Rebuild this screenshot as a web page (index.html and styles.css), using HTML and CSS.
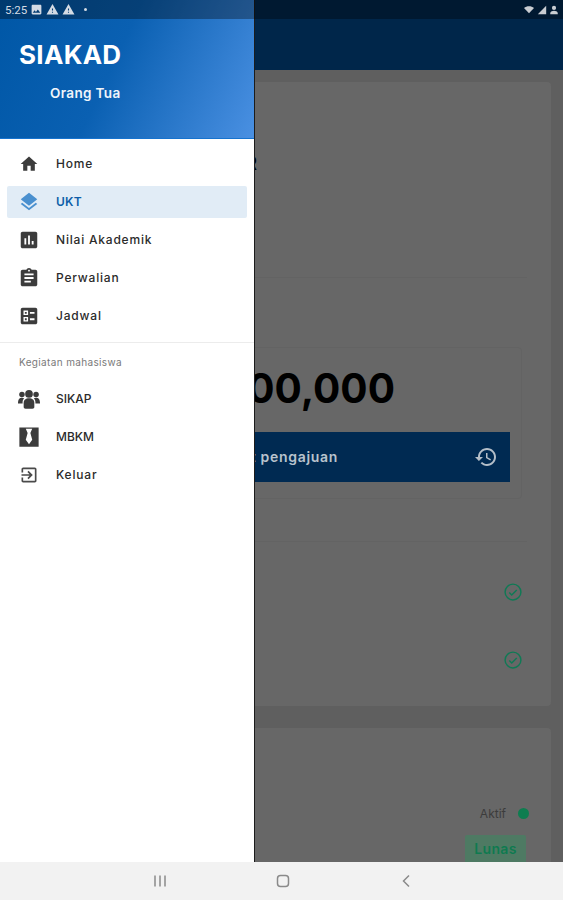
FILE: index.html
```html
<!DOCTYPE html>
<html lang="id">
<head>
<meta charset="utf-8">
<title>SIAKAD</title>
<link rel="stylesheet" href="styles.css">
</head>
<body>
<div class="screen">
  <div class="status">
    <div class="status-left">
      <span class="time">5:25</span>
      <svg class="si" viewBox="0 0 24 24"><path d="M21 19V5c0-1.100-.9-2-2-2H5c-1.100 0-2 .9-2 2v14c0 1.100.9 2 2 2h14c1.100 0 2-.9 2-2zM8.500 13.500l2.500 3 3.500-4.500 4.500 6H5l3.500-4.500z"/></svg>
      <svg class="si" viewBox="0 0 24 24"><path d="M1 21h22L12 2 1 21zm12-3h-2v-2h2v2zm0-4h-2v-4h2v4z"/></svg>
      <svg class="si" viewBox="0 0 24 24"><path d="M1 21h22L12 2 1 21zm12-3h-2v-2h2v2zm0-4h-2v-4h2v4z"/></svg>
      <span class="dot-small"></span>
    </div>
    <div class="status-right">
      <svg class="si-r" viewBox="0 0 24 24"><path d="M12 20L0 7c3.300-2.800 7.500-4 12-4s8.700 1.200 12 4L12 20z"/></svg>
      <svg class="si-r si-sig" viewBox="0 0 24 24"><path d="M2 22h20V2z"/></svg>
      <svg class="si-r si-sig" viewBox="0 0 24 24"><circle cx="12" cy="7" r="5"/><path d="M3 22v-3c0-3 6-5 9-5s9 2 9 5v3z"/></svg>
    </div>
  </div>

  <div class="appbar"></div>

  <main class="content">
    <section class="card card-main">
      <div class="intro"><span class="intro-title">Pembayaran R</span></div>
      <div class="bill">
        <div class="amount">Rp 2,000,000</div>
        <div class="action">
          <span class="action-text">Riwayat pengajuan</span>
          <svg class="action-icon" viewBox="0 0 24 24"><path d="M13 3c-4.970 0-9 4.030-9 9H1l3.890 3.890.07.14L9 12H6c0-3.870 3.130-7 7-7s7 3.130 7 7-3.130 7-7 7c-1.930 0-3.680-.79-4.940-2.060l-1.420 1.420C8.270 19.990 10.510 21 13 21c4.970 0 9-4.030 9-9s-4.030-9-9-9zm-1 5v5l4.280 2.540.72-1.210-3.500-2.080V8H12z"/></svg>
        </div>
      </div>
      <div class="checks">
        <div class="check-row"><svg class="check" viewBox="0 0 24 24"><circle cx="12" cy="12" r="9.500"/><path d="M7.500 12.500l3 3 6-6"/></svg></div>
        <div class="check-row"><svg class="check" viewBox="0 0 24 24"><circle cx="12" cy="12" r="9.500"/><path d="M7.500 12.500l3 3 6-6"/></svg></div>
      </div>
    </section>

    <section class="card card-second">
      <div class="state"><span class="state-text">Aktif</span><span class="state-dot"></span></div>
      <div class="badge-row"><span class="badge">Lunas</span></div>
    </section>
  </main>

  <aside class="drawer">
    <header class="drawer-head">
      <div class="brand">SIAKAD</div>
      <div class="role">Orang Tua</div>
    </header>
    <nav class="menu">
      <a class="item">
        <svg class="ico ico-home" viewBox="0 0 24 24"><path d="M10 20v-6h4v6h5v-8h3L12 3 2 12h3v8z"/></svg>
        <span>Home</span>
      </a>
      <a class="item item-active">
        <svg class="ico" viewBox="0 0 24 24"><path d="M11.990 18.540l-7.370-5.730L3 14.070l9 7 9-7-1.630-1.270-7.380 5.740zM12 16l7.360-5.730L21 9l-9-7-9 7 1.630 1.270L12 16z"/></svg>
        <span>UKT</span>
      </a>
      <a class="item">
        <svg class="ico" viewBox="0 0 24 24"><path d="M19 3H5c-1.100 0-2 .9-2 2v14c0 1.100.9 2 2 2h14c1.100 0 2-.9 2-2V5c0-1.100-.9-2-2-2zM9 17H7v-7h2v7zm4 0h-2V7h2v10zm4 0h-2v-4h2v4z"/></svg>
        <span>Nilai Akademik</span>
      </a>
      <a class="item">
        <svg class="ico" viewBox="0 0 24 24"><path d="M19 3h-4.180C14.400 1.840 13.300 1 12 1c-1.300 0-2.400.84-2.820 2H5c-1.100 0-2 .9-2 2v14c0 1.100.9 2 2 2h14c1.100 0 2-.9 2-2V5c0-1.100-.9-2-2-2zm-7 0c.55 0 1 .45 1 1s-.45 1-1 1-1-.45-1-1 .45-1 1-1zm2 14H7v-2h7v2zm3-4H7v-2h10v2zm0-4H7V7h10v2z"/></svg>
        <span>Perwalian</span>
      </a>
      <a class="item">
        <svg class="ico" viewBox="0 0 24 24"><path fill-rule="evenodd" d="M5 3h14c1.100 0 2 .9 2 2v14c0 1.100-.9 2-2 2H5c-1.100 0-2-.9-2-2V5c0-1.100.9-2 2-2zM6 6v5h5V6H6zm7 1.500v2h5v-2h-5zM6 13v5h5v-5H6zm7 1.500v2h5v-2h-5zM7.500 7.500h2v2h-2zM7.500 14.500h2v2h-2z"/></svg>
        <span>Jadwal</span>
      </a>
    </nav>
    <div class="divider"></div>
    <div class="subhead">Kegiatan mahasiswa</div>
    <nav class="menu menu-second">
      <a class="item item-caps">
        <svg class="ico" viewBox="0 0 24 24"><circle cx="4.300" cy="7" r="3"/><circle cx="19.700" cy="7" r="3"/><circle cx="12" cy="6.500" r="4.200"/><path d="M0 16c0-3.500 1.500-5.500 4.200-5.500 1 0 1.800.2 2.500.7C5.400 12.500 5 14 5 16v1H0zM24 16c0-3.500-1.500-5.500-4.200-5.500-1 0-1.800.2-2.500.7C18.600 12.500 19 14 19 16v1h5z"/><path d="M6.200 16.500c0-3.600 2.200-5.200 5.800-5.200s5.800 1.600 5.800 5.200v4.200c0 1.200-.8 1.800-2 1.800H8.200c-1.200 0-2-.6-2-1.800z"/></svg>
        <span>SIKAP</span>
      </a>
      <a class="item item-caps">
        <svg class="ico" viewBox="0 0 24 24"><path fill-rule="evenodd" d="M1.500 1.500h21v21h-21zM8.500 3l2 4.500L8.500 15l3.500 5 3.500-5-2-7.500L15.500 3z"/></svg>
        <span>MBKM</span>
      </a>
      <a class="item">
        <svg class="ico ico-thin" viewBox="0 0 24 24"><path d="M10.090 15.590L11.500 17l5-5-5-5-1.410 1.410L12.670 11H3v2h9.670l-2.580 2.590zM19 3H5c-1.110 0-2 .9-2 2v4h2V5h14v14H5v-4H3v4c0 1.100.89 2 2 2h14c1.100 0 2-.9 2-2V5c0-1.100-.9-2-2-2z"/></svg>
        <span>Keluar</span>
      </a>
    </nav>
  </aside>

  <footer class="navbar">
    <svg class="nav-ico" viewBox="0 0 14 14"><path d="M2 1.500v11M7 1.500v11M12 1.500v11"/></svg>
    <svg class="nav-ico" viewBox="0 0 14 14"><rect x="1.500" y="1.500" width="11" height="11" rx="3"/></svg>
    <svg class="nav-ico" viewBox="0 0 14 14"><path d="M10 1.500L4.500 7l5.500 5.500"/></svg>
  </footer>
</div>
</body>
</html>
```

FILE: styles.css
```css
* { box-sizing: border-box; }
html, body { margin: 0; padding: 0; }
body { font-family: Inter, "Liberation Sans", sans-serif; background: #5f5f5f; }

.screen {
  position: relative;
  width: 563px;
  height: 900px;
  overflow: hidden;
  display: flex;
  flex-direction: column;
  background: #5f5f5f;
}

/* Status bar */
.status {
  position: absolute;
  top: 0; left: 0; right: 0;
  height: 19px;
  z-index: 3;
  display: flex;
  justify-content: space-between;
  align-items: center;
  padding: 0 4px 0 5px;
  background: rgba(0, 0, 0, 0.33);
  color: #d4dbe4;
}
.status-left, .status-right { display: flex; align-items: center; }
.status-left { gap: 3px; }
.status-right { gap: 2px; }
.time { font-size: 11.500px; font-family: Roboto, sans-serif; }
.si { width: 13px; height: 13px; fill: #d4dbe4; }
.dot-small { width: 3px; height: 3px; border-radius: 50%; background: #d4dbe4; margin-left: 6px; }
.si-r { width: 12px; height: 10px; fill: #c9cdd2; }
.si-sig { width: 10px; }

/* App behind the drawer */
.appbar { height: 70px; flex: none; background: #00264a; }
.content {
  flex: 1;
  min-height: 0;
  overflow: hidden;
  padding: 12px 12px 0;
  display: flex;
  flex-direction: column;
  gap: 22px;
}
.card { background: #676767; border-radius: 4px; flex: none; }
.card-main { height: 624px; padding: 0 12px; }
.card-second { height: 140px; padding: 0 12px; }

.intro { height: 196px; padding-top: 71px; margin-right: 12px; border-bottom: 1px solid #636363; }
.intro-title { color: #000; font-size: 18px; font-weight: 600; white-space: nowrap; display: block; width: 233px; text-align: right; }

.bill {
  margin-top: 69px;
  height: 152px;
  margin-right: 17px;
  border: 1px solid #636363;
  border-radius: 4px;
  padding: 0 11px;
  display: flex;
  flex-direction: column;
}
.amount { font-size: 40.500px; font-weight: 700; color: #000; height: 84px; line-height: 82px; padding-right: 115px; text-align: right; white-space: nowrap; }
.action {
  height: 50px;
  background: #002a52;
  display: grid;
  grid-template-columns: 1fr auto 1fr;
  align-items: center;
  padding: 0 12px;
  color: #b9c3cd;
}
.action-text { grid-column: 2; margin: -2px 10px 0 0; font-size: 14px; font-weight: 600; letter-spacing: .7px; white-space: nowrap; }
.action-icon { grid-column: 3; justify-self: end; width: 24px; height: 24px; fill: #b4bec8; }

.checks { margin-top: 42px; margin-right: 12px; border-top: 1px solid #636363; padding-top: 16px; }
.check-row { height: 68px; display: flex; align-items: center; justify-content: flex-end; padding-right: 4px; }
.check { width: 20px; height: 20px; fill: none; stroke: #0f7a55; stroke-width: 1.700; }

.state { margin-top: 77px; height: 16px; display: flex; align-items: center; justify-content: flex-end; gap: 12px; padding-right: 10px; }
.state-text { font-size: 12px; color: #3c3c3c; }
.state-dot { width: 11px; height: 11px; border-radius: 50%; background: #0e7d50; }
.badge-row { display: flex; justify-content: flex-end; margin-top: 14px; padding-right: 13px; }
.badge { width: 61px; height: 30px; line-height: 28px; text-align: center; background: #4e7a63; color: #0e7a50; font-size: 14px; font-weight: 600; letter-spacing: .3px; border-radius: 2px; }

/* Drawer */
.drawer {
  position: absolute;
  top: 0; left: 0; bottom: 38px;
  width: 254px;
  background: #fff;
  z-index: 2;
  box-shadow: 1px 0 0 #1c1c1c;
}
.drawer-head {
  height: 139px;
  padding: 40px 20px 0;
  color: #fff;
  background: linear-gradient(115deg, #0057a6 0%, #0a60b2 45%, #4a90e2 100%);
  border-bottom: 1px solid #1673cf;
}
.brand { font-size: 26px; line-height: 30px; font-weight: 700; letter-spacing: .3px; margin-left: -1px; }
.role { margin: 15px 0 0 30px; font-size: 13.500px; line-height: 16px; font-weight: 600; letter-spacing: .35px; color: #f0f5fb; }

.menu { padding: 9px 7px 0; display: flex; flex-direction: column; gap: 6px; }
.menu-second { padding-top: 0; }
.item {
  height: 32px;
  display: flex;
  align-items: center;
  gap: 16px;
  padding-left: 11px;
  border-radius: 2px;
  font-size: 12px;
  font-weight: 500;
  letter-spacing: .8px;
  color: #2b2b2b;
}
.item span { margin-top: -2px; }
.item-caps { letter-spacing: 0; }
.item-active { background: #e1ecf6; color: #0d5ea8; font-weight: 600; letter-spacing: .2px; }
.ico { width: 22px; height: 22px; flex: none; fill: #3c3c3c; }
.ico-home { padding: 1px; }
.ico-thin { fill: #4a4a4a; padding: 1px; }
.item-active .ico { fill: #4a90cf; }

.divider { height: 1px; background: #ececec; margin-top: 10px; }
.subhead { height: 40px; padding: 13px 0 0 19px; font-size: 10px; line-height: 13px; letter-spacing: .35px; color: #7a7a7a; }

/* Navigation bar */
.navbar {
  height: 38px;
  flex: none;
  position: relative;
  z-index: 3;
  background: #f2f2f2;
  display: flex;
  align-items: center;
  padding: 0 150px 0 153px;
  justify-content: space-between;
}
.nav-ico { width: 14px; height: 14px; fill: none; stroke: #8a8a8a; stroke-width: 1.500; }
```
